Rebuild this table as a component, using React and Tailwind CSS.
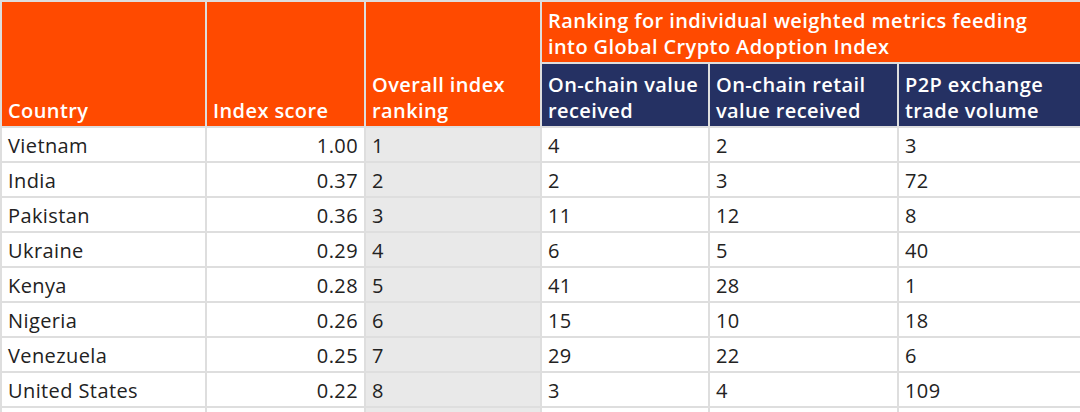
const rows = [
  ["Vietnam", "1.00", "1", "4", "2", "3"],
  ["India", "0.37", "2", "2", "3", "72"],
  ["Pakistan", "0.36", "3", "11", "12", "8"],
  ["Ukraine", "0.29", "4", "6", "5", "40"],
  ["Kenya", "0.28", "5", "41", "28", "1"],
  ["Nigeria", "0.26", "6", "15", "10", "18"],
  ["Venezuela", "0.25", "7", "29", "22", "6"],
  ["United States", "0.22", "8", "3", "4", "109"],
  ["", "", "", "", "", ""],
];

const th = "border-2 border-[#dedede] px-[6px] pb-[2px] text-left align-bottom font-semibold leading-[26px] whitespace-nowrap text-white";
const td = "border-2 border-[#dedede] px-[6px] pt-[2px] align-middle";

export default function App() {
  return (
    <div className="h-[412px] w-[1080px] overflow-hidden bg-white font-['Open_Sans',sans-serif] text-[20px] tracking-[0.4px] text-[#222]">
      <table className="w-[1080px] table-fixed border-collapse">
        <colgroup>
          <col className="w-[205px]" />
          <col className="w-[159px]" />
          <col className="w-[176px]" />
          <col className="w-[168px]" />
          <col className="w-[189px]" />
          <col className="w-[183px]" />
        </colgroup>
        <thead>
          <tr className="h-[62px]">
            <th rowSpan={2} className={`${th} bg-[#ff4a00]`}>Country</th>
            <th rowSpan={2} className={`${th} bg-[#ff4a00]`}>Index score</th>
            <th rowSpan={2} className={`${th} bg-[#ff4a00]`}>
              Overall index
              <br />
              ranking
            </th>
            <th colSpan={3} className={`${th} bg-[#ff4a00]`}>
              Ranking for individual weighted metrics feeding
              <br />
              into Global Crypto Adoption Index
            </th>
          </tr>
          <tr className="h-[64px]">
            <th className={`${th} bg-[#253163]`}>
              On-chain value
              <br />
              received
            </th>
            <th className={`${th} bg-[#253163]`}>
              On-chain retail
              <br />
              value received
            </th>
            <th className={`${th} bg-[#253163]`}>
              P2P exchange
              <br />
              trade volume
            </th>
          </tr>
        </thead>
        <tbody>
          {rows.map((r, i) => (
            <tr key={i} className="h-[35px]">
              <td className={td}>{r[0]}</td>
              <td className={`${td} text-right`}>{r[1]}</td>
              <td className={`${td} bg-[#e9e9e9]`}>{r[2]}</td>
              <td className={td}>{r[3]}</td>
              <td className={td}>{r[4]}</td>
              <td className={td}>{r[5]}</td>
            </tr>
          ))}
        </tbody>
      </table>
    </div>
  );
}
